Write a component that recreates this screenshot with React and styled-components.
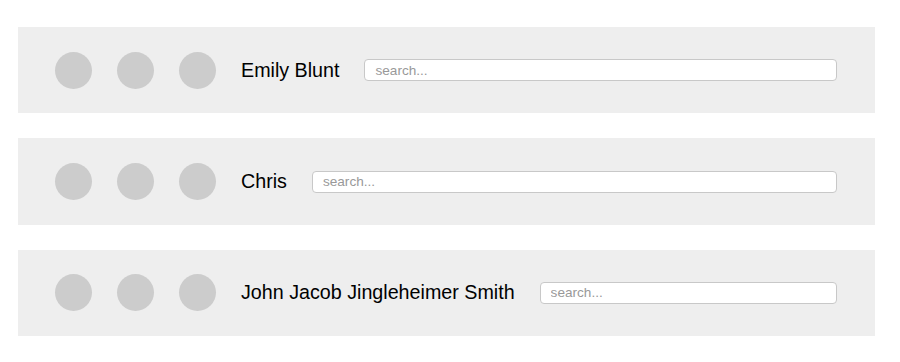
import React from "react";
import styled, { createGlobalStyle } from "styled-components";

const GlobalStyle = createGlobalStyle`
  body {
    margin: 0;
    background: #ffffff;
    font-family: "Liberation Sans", Arial, Helvetica, sans-serif;
  }
`;

const Page = styled.div`
  display: flex;
  flex-direction: column;
  gap: 25px;
  padding: 27px 25px 0 18px;
`;

const Row = styled.div`
  display: flex;
  align-items: center;
  height: 86.4px;
  padding: 0 38px 0 37px;
  background-color: #eeeeee;
`;

const Avatars = styled.div`
  display: flex;
  gap: 25px;
`;

const Avatar = styled.div`
  width: 37px;
  height: 37px;
  border-radius: 50%;
  background-color: #cccccc;
`;

const Name = styled.span`
  margin-left: 25px;
  font-size: 19.7px;
  color: #000000;
  white-space: nowrap;
`;

const Search = styled.input`
  flex: 1;
  min-width: 0;
  height: 22px;
  box-sizing: border-box;
  margin-left: 25px;
  padding: 0 10px;
  border: 1px solid #c8c8c8;
  border-radius: 4px;
  background: #ffffff;
  font-family: inherit;
  font-size: 13.6px;
  outline: none;

  &::placeholder {
    color: #999999;
  }
`;

const people = ["Emily Blunt", "Chris", "John Jacob Jingleheimer Smith"];

export default function App() {
  return (
    <>
      <GlobalStyle />
      <Page>
        {people.map((name) => (
          <Row key={name}>
            <Avatars>
              <Avatar />
              <Avatar />
              <Avatar />
            </Avatars>
            <Name>{name}</Name>
            <Search placeholder="search..." />
          </Row>
        ))}
      </Page>
    </>
  );
}
